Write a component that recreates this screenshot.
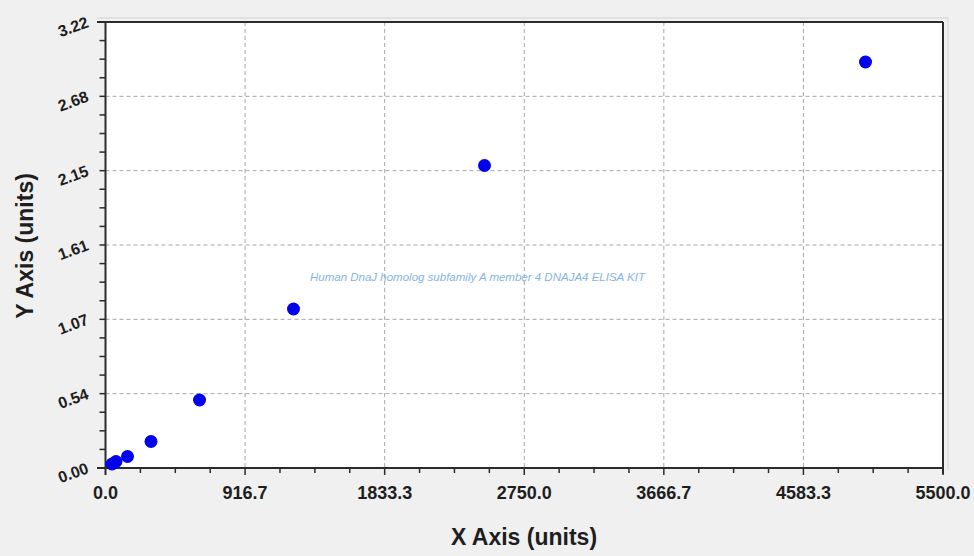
import React from 'react';

const left = 105.5;
const right = 943;
const top = 22;
const bottom = 468;

const xLabels = ['0.0', '916.7', '1833.3', '2750.0', '3666.7', '4583.3', '5500.0'];
const yLabels = ['0.00', '0.54', '1.07', '1.61', '2.15', '2.68', '3.22'];

// measured point centres (px)
const points = [
  [112, 464],
  [116, 461.5],
  [127.5, 456.5],
  [151, 441.5],
  [199.5, 400],
  [293.5, 309],
  [484.5, 165.5],
  [865.5, 62],
];

const stepX = (right - left) / 6;
const stepY = (bottom - top) / 6;

export default function App() {
  const minorX = Array.from({ length: 24 }, (_, i) => left + ((i + 1) * stepX) / 4);
  const minorY = Array.from({ length: 24 }, (_, i) => bottom - ((i + 1) * stepY) / 4);

  return (
    <div className="w-[974px] h-[556px] bg-[#f0f0f0] overflow-hidden">
      <svg width="974" height="556" viewBox="0 0 974 556" className="block">
        {/* faint frame shadow */}
        <line x1={97} y1={18} x2={948} y2={18} stroke="#dcdcdc" strokeWidth={1.5} />
        <line x1={948} y1={18} x2={948} y2={470} stroke="#dcdcdc" strokeWidth={1.5} />

        {/* plot area */}
        <rect x={left} y={top} width={right - left} height={bottom - top} fill="#ffffff" />

        {/* grid */}
        {[1, 2, 3, 4, 5].map((i) => (
          <line
            key={'gx' + i}
            x1={left + i * stepX}
            y1={top}
            x2={left + i * stepX}
            y2={bottom}
            stroke="#a8a8a8"
            strokeWidth={1}
            strokeDasharray="4 3"
          />
        ))}
        {[1, 2, 3, 4, 5].map((i) => (
          <line
            key={'gy' + i}
            x1={left}
            y1={bottom - i * stepY}
            x2={right}
            y2={bottom - i * stepY}
            stroke="#a8a8a8"
            strokeWidth={1}
            strokeDasharray="4 3"
          />
        ))}

        {/* frame */}
        <line x1={97} y1={top} x2={right} y2={top} stroke="#2b2b2b" strokeWidth={2} />
        <line x1={right} y1={top} x2={right} y2={bottom + 6} stroke="#2b2b2b" strokeWidth={2} />
        <line x1={left} y1={top} x2={left} y2={bottom + 7} stroke="#2b2b2b" strokeWidth={2} />
        <line x1={97} y1={bottom} x2={right} y2={bottom} stroke="#2b2b2b" strokeWidth={2} />

        {/* ticks */}
        {minorX.map((x, i) => (
          <line key={'tx' + i} x1={x} y1={bottom} x2={x} y2={bottom + ((i + 1) % 4 === 0 ? 7 : 5)} stroke="#2b2b2b" strokeWidth={1.5} />
        ))}
        {minorY.map((y, i) => (
          <line key={'ty' + i} x1={left} y1={y} x2={left - 6} y2={y} stroke="#2b2b2b" strokeWidth={1.5} />
        ))}

        {/* watermark title */}
        <text
          x={310}
          y={281}
          fill="#86b4e4"
          fontSize={11.5}
          fontStyle="italic"
          fontFamily='"Liberation Sans", Arial, sans-serif'
        >
          Human DnaJ homolog subfamily A member 4 DNAJA4 ELISA KIT
        </text>

        {/* points */}
        {points.map(([cx, cy], i) => (
          <circle key={'p' + i} cx={cx} cy={cy} r={6.5} fill="#0000ee" />
        ))}

        {/* x labels */}
        {xLabels.map((l, i) => (
          <text
            key={'xl' + i}
            x={left + i * stepX}
            y={499}
            textAnchor="middle"
            fontSize={18}
            fontWeight={700}
            fill="#1e1e1e"
            fontFamily='"Liberation Sans", Arial, sans-serif'
          >
            {l}
          </text>
        ))}

        {/* y labels */}
        {yLabels.map((l, i) => {
          const y = bottom - i * stepY;
          return (
            <text
              key={'yl' + i}
              x={88}
              y={y + 5}
              textAnchor="end"
              fontSize={16}
              fontWeight={700}
              fill="#1e1e1e"
              fontFamily='"Liberation Sans", Arial, sans-serif'
              transform={`rotate(-20 88 ${y})`}
            >
              {l}
            </text>
          );
        })}

        {/* axis titles */}
        <text
          x={524}
          y={545}
          textAnchor="middle"
          fontSize={23}
          fontWeight={700}
          fill="#1e1e1e"
          fontFamily='"Liberation Sans", Arial, sans-serif'
        >
          X Axis (units)
        </text>
        <text
          x={0}
          y={0}
          textAnchor="middle"
          fontSize={23}
          fontWeight={700}
          fill="#1e1e1e"
          fontFamily='"Liberation Sans", Arial, sans-serif'
          transform="translate(33 246) rotate(-90)"
        >
          Y Axis (units)
        </text>
      </svg>
    </div>
  );
}
